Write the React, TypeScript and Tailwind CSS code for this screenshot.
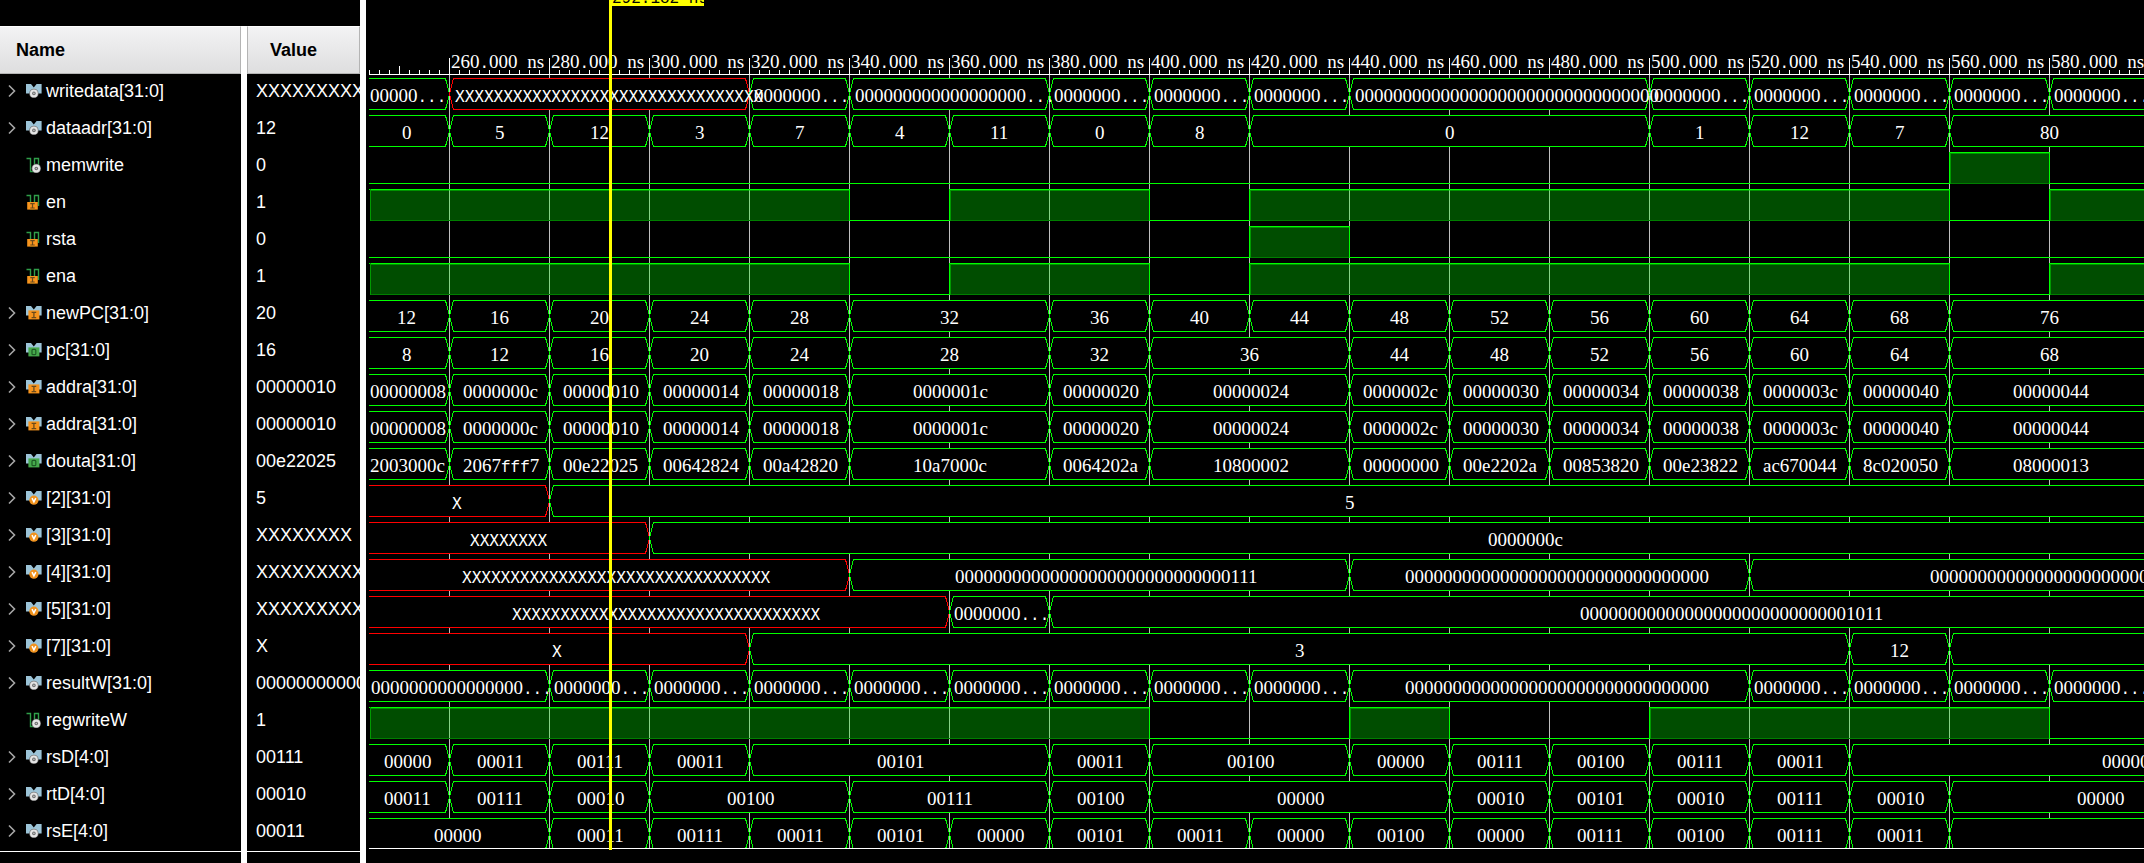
import React from "react";

type Kind = "gear" | "input" | "output" | "variable";
type Segment = { until: number; text: string; unknown?: boolean };
type Signal = {
  name: string;
  value: string;
  kind: Kind;
  segments?: Segment[];
  high?: [number, number][];
};

const PX_PER_NS = 5;
const FIRST_MARK = 260;
const FIRST_MARK_X = 83;
const VIEW_START = 243;
const FAR = 650;
const GREEN = "#00ff00";
const RED = "#ff0000";

const toX = (ns: number) => FIRST_MARK_X + (ns - FIRST_MARK) * PX_PER_NS;
const marks = Array.from({ length: 17 }, (_, i) => FIRST_MARK + i * 20);
const zeros = (n: number) => "0".repeat(n);
const short = zeros(7) + "...";

const bus = (...items: [number, string][]): Segment[] =>
  items.map(([until, text]) => ({ until, text, unknown: /^X+$/.test(text) }));

const enable: [number, number][] = [[VIEW_START, 340], [360, 400], [420, 560], [580, FAR]];

const address = bus(
  [260, "00000008"], [280, "0000000c"], [300, "00000010"], [320, "00000014"], [340, "00000018"],
  [380, "0000001c"], [400, "00000020"], [440, "00000024"], [460, "0000002c"], [480, "00000030"],
  [500, "00000034"], [520, "00000038"], [540, "0000003c"], [560, "00000040"], [600, "00000044"],
);

const signals: Signal[] = [
  {
    name: "writedata[31:0]", value: "X".repeat(32), kind: "gear",
    segments: bus(
      [260, "00000..."], [320, "X".repeat(32)], [340, short], [380, zeros(18) + "..."], [400, short],
      [420, short], [440, short], [500, zeros(32)], [520, short], [540, short], [560, short],
      [580, short], [600, short],
    ),
  },
  {
    name: "dataadr[31:0]", value: "12", kind: "gear",
    segments: bus(
      [260, "0"], [280, "5"], [300, "12"], [320, "3"], [340, "7"], [360, "4"], [380, "11"], [400, "0"],
      [420, "8"], [500, "0"], [520, "1"], [540, "12"], [560, "7"], [600, "80"],
    ),
  },
  { name: "memwrite", value: "0", kind: "gear", high: [[560, 580]] },
  { name: "en", value: "1", kind: "input", high: enable },
  { name: "rsta", value: "0", kind: "input", high: [[420, 440]] },
  { name: "ena", value: "1", kind: "input", high: enable },
  {
    name: "newPC[31:0]", value: "20", kind: "input",
    segments: bus(
      [260, "12"], [280, "16"], [300, "20"], [320, "24"], [340, "28"], [380, "32"], [400, "36"], [420, "40"],
      [440, "44"], [460, "48"], [480, "52"], [500, "56"], [520, "60"], [540, "64"], [560, "68"], [600, "76"],
    ),
  },
  {
    name: "pc[31:0]", value: "16", kind: "output",
    segments: bus(
      [260, "8"], [280, "12"], [300, "16"], [320, "20"], [340, "24"], [380, "28"], [400, "32"], [440, "36"],
      [460, "44"], [480, "48"], [500, "52"], [520, "56"], [540, "60"], [560, "64"], [600, "68"],
    ),
  },
  { name: "addra[31:0]", value: "00000010", kind: "input", segments: address },
  { name: "addra[31:0]", value: "00000010", kind: "input", segments: address },
  {
    name: "douta[31:0]", value: "00e22025", kind: "output",
    segments: bus(
      [260, "2003000c"], [280, "2067fff7"], [300, "00e22025"], [320, "00642824"], [340, "00a42820"],
      [380, "10a7000c"], [400, "0064202a"], [440, "10800002"], [460, "00000000"], [480, "00e2202a"],
      [500, "00853820"], [520, "00e23822"], [540, "ac670044"], [560, "8c020050"], [600, "08000013"],
    ),
  },
  { name: "[2][31:0]", value: "5", kind: "variable", segments: bus([280, "X"], [600, "5"]) },
  { name: "[3][31:0]", value: "XXXXXXXX", kind: "variable", segments: bus([300, "XXXXXXXX"], [FAR, "0000000c"]) },
  {
    name: "[4][31:0]", value: "X".repeat(32), kind: "variable",
    segments: bus([340, "X".repeat(32)], [440, zeros(29) + "111"], [520, zeros(32)], [FAR, zeros(32)]),
  },
  {
    name: "[5][31:0]", value: "X".repeat(32), kind: "variable",
    segments: bus([360, "X".repeat(32)], [380, short], [FAR, zeros(28) + "1011"]),
  },
  {
    name: "[7][31:0]", value: "X", kind: "variable",
    segments: bus([320, "X"], [540, "3"], [560, "12"], [FAR, ""]),
  },
  {
    name: "resultW[31:0]", value: zeros(32), kind: "gear",
    segments: bus(
      [280, zeros(16) + "..."], [300, short], [320, short], [340, short], [360, short], [380, short],
      [400, short], [420, short], [440, short], [520, zeros(32)], [540, short], [560, short],
      [580, short], [600, short],
    ),
  },
  { name: "regwriteW", value: "1", kind: "gear", high: [[VIEW_START, 400], [440, 460], [500, 580]] },
  {
    name: "rsD[4:0]", value: "00111", kind: "gear",
    segments: bus(
      [260, "00000"], [280, "00011"], [300, "00111"], [320, "00011"], [380, "00101"], [400, "00011"],
      [440, "00100"], [460, "00000"], [480, "00111"], [500, "00100"], [520, "00111"], [540, "00011"],
      [FAR, "00000"],
    ),
  },
  {
    name: "rtD[4:0]", value: "00010", kind: "gear",
    segments: bus(
      [260, "00011"], [280, "00111"], [300, "00010"], [340, "00100"], [380, "00111"], [400, "00100"],
      [460, "00000"], [480, "00010"], [500, "00101"], [520, "00010"], [540, "00111"], [560, "00010"],
      [620, "00000"],
    ),
  },
  {
    name: "rsE[4:0]", value: "00011", kind: "gear",
    segments: bus(
      [280, "00000"], [300, "00011"], [320, "00111"], [340, "00011"], [360, "00101"], [380, "00000"],
      [400, "00101"], [420, "00011"], [440, "00000"], [460, "00100"], [480, "00000"], [500, "00111"],
      [520, "00100"], [540, "00111"], [560, "00011"], [FAR, ""],
    ),
  },
];

/* Digits use the serif face; characters that are narrow or wide there use a fixed-pitch face. */
function WaveText({ x, y, children }: { x: number; y: number; children: string }) {
  const parts = children.split(/(X+|[. f]+)/).filter(Boolean);
  return (
    <text x={x} y={y} fill="#ffffff" xmlSpace="preserve" className="font-['Liberation_Serif',serif] text-[19px]">
      {parts.map((part, i) => {
        if (part[0] === "X")
          return <tspan key={i} className="font-['DejaVu_Sans_Mono',monospace] text-[16px]">{part}</tspan>;
        if (/^[. f]/.test(part))
          return <tspan key={i} className="font-['Liberation_Mono',monospace] text-[16px]">{part}</tspan>;
        return part;
      })}
    </text>
  );
}

function GridLines() {
  return (
    <>
      {marks.map((ns) => (
        <rect key={ns} x={toX(ns)} y={0} width={1} height={37} fill="#c0c0c0" />
      ))}
    </>
  );
}

function BusWave({ segments }: { segments: Segment[] }) {
  const cells = segments.map((s, i) => {
    const start = i === 0 ? VIEW_START : segments[i - 1].until;
    return { ...s, first: i === 0, x0: i === 0 ? -3 : toX(start), x1: toX(s.until) };
  });
  return (
    <>
      {cells.map((c) => {
        const a = c.first ? 3 : c.x0 + 0.5;
        const b = c.x1 + 0.5;
        const left = c.first ? `M${a} 3.5` : `M${a} 19 L${a + 4} 3.5`;
        const back = c.first ? `M${b - 4} 34.5 L${a} 34.5` : `L${a + 4} 34.5 L${a} 19`;
        const d = `${left} L${b - 4} 3.5 L${b} 19 L${b - 4} 34.5 ${back}`;
        return (
          <g key={c.until}>
            <rect x={c.first ? 3 : c.x0 + 2} y={3} width={c.x1 - (c.first ? 3 : c.x0 + 2) - 1} height={32} fill="#000000" />
            <path d={d} fill="none" stroke={c.unknown ? RED : GREEN} strokeWidth={1} shapeRendering="crispEdges" />
          </g>
        );
      })}
      {cells.map((c) => (
        <WaveText key={c.until} x={Math.round((c.x0 + c.x1) / 2 - c.text.length * 4.5)} y={27}>
          {c.text}
        </WaveText>
      ))}
    </>
  );
}

function LogicWave({ high }: { high: [number, number][] }) {
  return (
    <>
      {high.map(([from, to], i) => {
        const a = from === VIEW_START ? 3 : toX(from);
        const prev = i === 0 ? 3 : toX(high[i - 1][1]);
        const b = toX(to);
        return (
          <g key={from}>
            {a > prev && <rect x={prev} y={34} width={a - prev} height={1} fill={GREEN} />}
            <rect x={a + 1} y={4} width={b - a - 1} height={30} fill={GREEN} fillOpacity={0.3} />
            <rect x={a + 1} y={4} width={b - a - 1} height={1} fill={GREEN} fillOpacity={0.4} />
            <rect x={a + 1} y={34} width={b - a - 1} height={1} fill="#007f00" />
            <rect x={a} y={3} width={b - a + 1} height={1} fill={GREEN} />
            <rect x={from === VIEW_START ? 4 : a} y={3} width={1} height={32} fill={from === VIEW_START ? "#009900" : GREEN} />
            {from !== VIEW_START && <rect x={a + 1} y={4} width={1} height={31} fill="#009900" />}
            <rect x={b} y={3} width={1} height={32} fill={GREEN} />
          </g>
        );
      })}
      {high[high.length - 1][1] < FAR && (
        <rect x={toX(high[high.length - 1][1])} y={34} width={2000} height={1} fill={GREEN} />
      )}
    </>
  );
}

function Ruler() {
  const ticks = Array.from({ length: 186 }, (_, i) => 3 + i * 10);
  return (
    <svg className="block h-[75px] w-full overflow-hidden" aria-label="Time ruler">
      {ticks.map((x) => (
        <rect key={x} x={x} y={x === 33 ? 66 : 70} width={1} height={x === 33 ? 9 : 5} fill="#ffffff" />
      ))}
      {marks.map((ns) => (
        <g key={ns}>
          <rect x={toX(ns)} y={58} width={1} height={17} fill="#ffffff" />
          <WaveText x={toX(ns) + 2} y={68}>{`${ns}.000 ns`}</WaveText>
        </g>
      ))}
      <rect x={3} y={74} width="100%" height={1} fill="#ffffff" />
    </svg>
  );
}

function Gear({ cx, cy }: { cx: number; cy: number }) {
  return (
    <g>
      <circle cx={cx} cy={cy} r={4.7} fill="#777777" />
      <circle cx={cx} cy={cy} r={3.9} fill="#e4e4e4" />
      <circle cx={cx} cy={cy} r={1.8} fill="#6d6d6d" />
      <circle cx={cx} cy={cy} r={0.8} fill="#c4c4c4" />
    </g>
  );
}

function SignalIcon({ kind, scalar }: { kind: Kind; scalar: boolean }) {
  return (
    <svg viewBox="0 0 16 16" className="block h-4 w-4 shrink-0" aria-hidden="true">
      {scalar ? (
        <>
          <path d="M0.5 1.5H4.5V14.5H8.5V1.5H12.5V12" fill="none" stroke="#2f9e49" strokeWidth={1.4} />
          {kind === "gear" ? (
            <Gear cx={10.3} cy={11.5} />
          ) : (
            <>
              <rect x={1.2} y={8} width={10.6} height={7.6} fill="#f7941d" />
              <path d="M4.3 9.6H8.7M4.3 14H8.7M6.5 9.6V14" stroke="#6a4a1c" strokeWidth={1.2} fill="none" />
            </>
          )}
        </>
      ) : (
        <>
          <path d="M0 1H5L7.8 4.6L10.6 1H15.6V10.6H11.6L7.8 7L4 10.6H0Z" fill="#9cc4d8" />
          {kind === "gear" && <Gear cx={7.9} cy={10.4} />}
          {kind === "variable" && (
            <>
              <circle cx={7.9} cy={10.2} r={4.6} fill="#f0921e" />
              <path d="M6 8.1L7.9 11.9L9.8 8.1" stroke="#ffffff" strokeWidth={1.5} fill="none" />
            </>
          )}
          {kind === "input" && (
            <>
              <rect x={2.4} y={5.4} width={11} height={9} fill="#f7941d" />
              <path d="M5.6 7.3H10.2M5.6 12.6H10.2M7.9 7.3V12.6" stroke="#6a4a1c" strokeWidth={1.3} fill="none" />
            </>
          )}
          {kind === "output" && (
            <>
              <rect x={2.4} y={5.4} width={11} height={9} fill="#46a94c" />
              <rect x={6} y={7.3} width={3.8} height={5.4} rx={1} stroke="#1d5a24" strokeWidth={1.2} fill="none" />
            </>
          )}
        </>
      )}
    </svg>
  );
}

function Chevron() {
  return (
    <svg viewBox="0 0 8 14" className="block h-[14px] w-2" aria-hidden="true">
      <path d="M1 1.5L6.5 7L1 12.5" fill="none" stroke="#a6a6a6" strokeWidth={1.6} />
    </svg>
  );
}

function SignalTable() {
  const head = "flex h-12 items-center border-t border-r border-b border-t-white border-r-[#b4b4b4] border-b-[#b4b4b4] bg-linear-to-b from-[#f3f3f4] to-[#dededf] text-left font-bold text-black";
  return (
    <table className="mt-[26px] w-[360px] table-fixed border-separate border-spacing-0 text-[18px] leading-6 text-white">
      <colgroup>
        <col className="w-[247px]" />
        <col className="w-[113px]" />
      </colgroup>
      <thead>
        <tr>
          <th className="border-r-[6px] border-white p-0">
            <div className={`${head} pl-4`}>Name</div>
          </th>
          <th className="p-0">
            <div className={`${head} border-l border-l-[#b4b4b4] pl-[22px]`}>Value</div>
          </th>
        </tr>
      </thead>
      <tbody>
        {signals.map((s, i) => (
          <tr key={i}>
            <td className="h-[37px] border-r-[6px] border-white p-0 pb-[3px]">
              <div className="flex items-center pl-2">
                {s.segments ? (
                  <button type="button" aria-label={`Expand ${s.name}`} className="w-[18px]">
                    <Chevron />
                  </button>
                ) : (
                  <span className="w-[18px]" />
                )}
                <SignalIcon kind={s.kind} scalar={!s.segments} />
                <span className="pl-1 whitespace-nowrap">{s.name}</span>
              </div>
            </td>
            <td className="h-[37px] overflow-hidden p-0 pb-[3px] pl-[9px] whitespace-nowrap">{s.value}</td>
          </tr>
        ))}
        <tr>
          <td className="h-3 border-r-[6px] border-white p-0"><div className="h-3 border-t border-white" /></td>
          <td className="h-3 p-0"><div className="h-3 border-t border-white" /></td>
        </tr>
      </tbody>
    </table>
  );
}

export default function App() {
  return (
    <main className="flex min-h-screen w-full items-stretch overflow-hidden bg-black font-['Liberation_Sans',Arial,sans-serif]">
      <section className="shrink-0 border-r-[6px] border-white" aria-label="Signals">
        <SignalTable />
      </section>
      <section className="relative min-w-0 flex-1 overflow-hidden" aria-label="Waveforms">
        <Ruler />
        <div className="h-[774px] overflow-hidden">
          {signals.map((s, i) => (
            <svg key={i} className="block h-[37px] w-full overflow-hidden" aria-label={`${s.name} waveform`}>
              <GridLines />
              {s.segments && <BusWave segments={s.segments} />}
              {s.high && <LogicWave high={s.high} />}
            </svg>
          ))}
        </div>
        <div className="relative -mt-px ml-[3px] h-px bg-white" />
        <div className="absolute top-0 left-[243px] h-[850px] w-[3px] bg-[#ffff00]" />
        <div className="absolute top-0 left-[244px] flex h-[6px] w-[94px] items-end overflow-hidden bg-[#ffff00] pl-0.5 font-['Liberation_Mono',monospace] text-[16px] leading-[14px] whitespace-nowrap text-black">
          292.182 ns
        </div>
      </section>
    </main>
  );
}
